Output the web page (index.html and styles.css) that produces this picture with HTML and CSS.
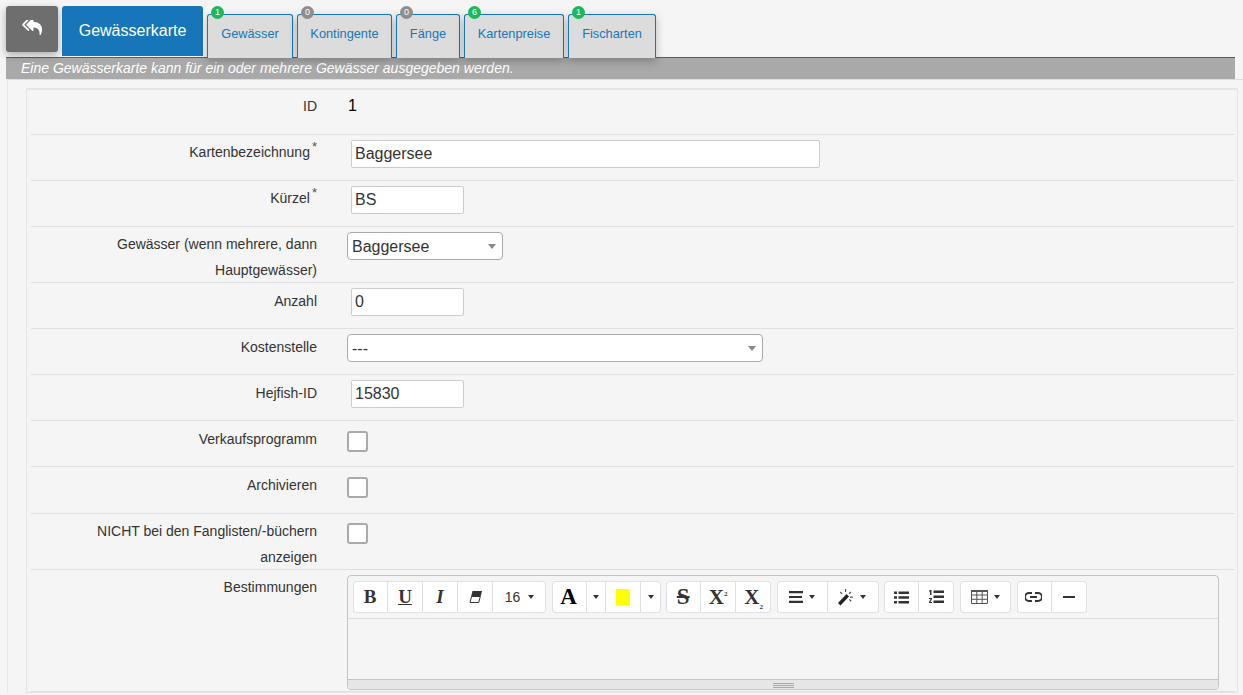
FILE: index.html
```html
<!DOCTYPE html>
<html lang="de">
<head>
    <meta charset="UTF-8">
    <meta name="viewport" content="width=device-width, initial-scale=1.0">
    <title>Gewässerkarte</title>
    <link rel="stylesheet" href="styles.css">
</head>
<body>
    <div class="tabbar">
        <button class="back-button" type="button" aria-label="Zurück">
            <svg width="20" height="15" viewBox="0 224 1792 1344"><path fill="#fff" d="M640 1082v70q0 42-39 59-13 5-25 5-27 0-45-19l-512-512q-19-19-19-45t19-45l512-512q29-31 70-14 39 17 39 59v69l-397 398q-19 19-19 45t19 45zm1152 38q0 58-17 133.500t-38.500 138-48 125-40.500 90.500l-20 40q-8 17-28 17-6 0-9-1-25-8-23-34 43-400-106-565-64-71-170.500-110.500t-267.500-52.500v251q0 42-39 59-13 5-25 5-27 0-45-19l-512-512q-19-19-19-45t19-45l512-512q29-31 70-14 39 17 39 59v262q411 28 599 221 169 173 169 509z"/></svg>
        </button>
        <a class="tab-main" href="#">Gewässerkarte</a>
        <a class="tab" href="#"><span class="badge badge-green">1</span>Gewässer</a>
        <a class="tab tab-kontingente" href="#"><span class="badge">0</span>Kontingente</a>
        <a class="tab tab-faenge" href="#"><span class="badge">0</span>Fänge</a>
        <a class="tab tab-preise" href="#"><span class="badge badge-green">6</span>Kartenpreise</a>
        <a class="tab tab-arten" href="#"><span class="badge badge-green">1</span>Fischarten</a>
    </div>
    <div class="hint">Eine Gewässerkarte kann für ein oder mehrere Gewässer ausgegeben werden.</div>

    <div class="panel">
        <div class="form-box">
            <div class="row row-first">
                <label class="row-label">ID</label>
                <div class="static-value">1</div>
            </div>
            <div class="row">
                <label class="row-label">Kartenbezeichnung<sup class="req">*</sup></label>
                <input class="text-input text-wide" type="text" value="Baggersee">
            </div>
            <div class="row">
                <label class="row-label">Kürzel<sup class="req">*</sup></label>
                <input class="text-input" type="text" value="BS">
            </div>
            <div class="row row-tall">
                <label class="row-label">Gewässer (wenn mehrere, dann Hauptgewässer)</label>
                <div class="select select-small">Baggersee<span class="select-arrow"></span></div>
            </div>
            <div class="row row-low">
                <label class="row-label">Anzahl</label>
                <input class="text-input" type="text" value="0">
            </div>
            <div class="row row-low">
                <label class="row-label">Kostenstelle</label>
                <div class="select select-wide">---<span class="select-arrow"></span></div>
            </div>
            <div class="row row-low">
                <label class="row-label">Hejfish-ID</label>
                <input class="text-input" type="text" value="15830">
            </div>
            <div class="row row-low">
                <label class="row-label">Verkaufsprogramm</label>
                <span class="checkbox"></span>
            </div>
            <div class="row row-low row-archive">
                <label class="row-label">Archivieren</label>
                <span class="checkbox"></span>
            </div>
            <div class="row row-tall">
                <label class="row-label">NICHT bei den Fanglisten/-büchern anzeigen</label>
                <span class="checkbox"></span>
            </div>
            <div class="row row-editor">
                <label class="row-label">Bestimmungen</label>
                <div class="editor">
                    <div class="toolbar">
                        <div class="btn-group">
                            <button class="tool tool-serif" type="button"><b>B</b></button>
                            <button class="tool tool-serif tool-under" type="button"><b>U</b></button>
                            <button class="tool tool-serif" type="button"><b><i>I</i></b></button>
                            <button class="tool" type="button">
                                <svg width="13" height="12" viewBox="0 0 13 12"><path fill="#333" d="M3.500 0H13l-1.500 6H2z"/><path fill="none" stroke="#333" d="M2.400 6 1 11.500h8.700L11.200 6"/></svg>
                            </button>
                            <button class="tool tool-size" type="button">16<span class="caret"></span></button>
                        </div>
                        <div class="btn-group">
                            <button class="tool tool-serif tool-color" type="button"><b>A</b></button>
                            <button class="tool tool-caret" type="button"><span class="caret"></span></button>
                            <button class="tool" type="button"><span class="swatch"></span></button>
                            <button class="tool tool-caret" type="button"><span class="caret"></span></button>
                        </div>
                        <div class="btn-group">
                            <button class="tool tool-serif tool-strike" type="button"><b class="strike">S</b></button>
                            <button class="tool tool-serif tool-big" type="button"><b>X<sup class="script">2</sup></b></button>
                            <button class="tool tool-serif tool-big" type="button"><b>X<sub class="script">2</sub></b></button>
                        </div>
                        <div class="btn-group">
                            <button class="tool tool-drop" type="button">
                                <svg width="14" height="12" viewBox="0 0 14 12"><path fill="#333" d="M0 0h14v2.200H0zM0 4.900h13v2.200H0zM0 9.800h14V12H0z"/></svg><span class="caret"></span>
                            </button>
                            <button class="tool tool-drop tool-wand" type="button">
                                <svg width="17" height="17" viewBox="0 0 17 17"><path fill="#222" d="m9.500 5 2.500 2.500L3.500 16.500 1 14z"/><path fill="#555" d="M8 0h1.200v3H8zM13.500 2.500l.9.900-1.800 1.800-.9-.9zM3.600 2.500l2 1.900-.9.900-2-1.900zM13 7.500h3v1.200h-3zM12 11l.9-.9 1.800 1.800-.9.900z"/></svg><span class="caret"></span>
                            </button>
                        </div>
                        <div class="btn-group">
                            <button class="tool" type="button">
                                <svg width="15" height="13" viewBox="0 0 15 13"><path fill="#333" d="M0 .5h3v2.500H0zM0 5.200h3v2.500H0zM0 10h3v2.500H0zM4.500 .5H15V3H4.500zM4.500 5.200H15v2.500H4.500zM4.500 10H15v2.500H4.500z"/></svg>
                            </button>
                            <button class="tool" type="button">
                                <svg width="15" height="14" viewBox="0 0 15 14"><path fill="#333" d="M1 0h1.500v5H1zM0 .8 1 0v1.200L0 1.800zM0 8h3v1L1.400 12H3v1H0v-1l1.700-3H0zM4.500 .5H15V3H4.500zM4.500 5.500H15V8H4.500zM4.500 10.500H15V13H4.500z"/></svg>
                            </button>
                        </div>
                        <div class="btn-group">
                            <button class="tool tool-drop" type="button">
                                <svg width="17" height="14" viewBox="0 0 17 14"><path fill="none" stroke="#555" d="M.5.500h16v13H.500zM.5 5h16M.5 9.300h16M5.800.5v13M11.200.5v13"/><path fill="#555" d="M0 0h17v2H0z"/></svg><span class="caret"></span>
                            </button>
                        </div>
                        <div class="btn-group">
                            <button class="tool" type="button">
                                <svg width="17" height="10" viewBox="0 0 17 10"><path fill="none" stroke="#333" stroke-width="2" d="M7 1H4a4 4 0 0 0 0 8h3M10 1h3a4 4 0 0 1 0 8h-3M5 5h7"/></svg>
                            </button>
                            <button class="tool" type="button">
                                <svg width="12" height="2" viewBox="0 0 12 2"><path fill="#333" d="M0 0h12v2H0z"/></svg>
                            </button>
                        </div>
                    </div>
                    <div class="editor-area"></div>
                    <div class="statusbar"><span class="grip"></span></div>
                </div>
            </div>
        </div>
    </div>
</body>
</html>
```

FILE: styles.css
```css
body {
    margin: 0;
    height: 695px;
    overflow: hidden;
    background-color: #f5f5f5;
    color: #333;
    font-family: "Liberation Sans", Arial, sans-serif;
    font-size: 14px;
}

/* Kopfzeile mit Reitern */
.tabbar {
    display: flex;
    align-items: flex-start;
    gap: 4px;
    height: 51px;
    margin: 0 8px 0 6px;
    padding-top: 6px;
    border-bottom: 1px solid #1a6ea8;
}
.back-button {
    display: flex;
    align-items: center;
    justify-content: center;
    width: 52px;
    height: 46px;
    padding: 0 0 3px;
    background-color: #6e6e6e;
    border: none;
    border-radius: 3px;
    box-shadow: 0 3px 8px rgba(0, 0, 0, 0.3);
}
.tab-main {
    width: 141px;
    height: 50px;
    background-color: #1676b9;
    border-radius: 3px 3px 0 0;
    color: #fff;
    font-size: 16px;
    line-height: 49px;
    text-align: center;
    text-decoration: none;
}
.tab {
    position: relative;
    box-sizing: border-box;
    width: 86px;
    height: 44px;
    margin-top: 8px;
    background-color: #dcdcdc;
    border: 1px solid #1676b9;
    border-bottom: none;
    border-radius: 3px 3px 0 0;
    box-shadow: 0 3px 8px rgba(0, 0, 0, 0.25);
    color: #1676b9;
    font-size: 12.800px;
    line-height: 38px;
    text-align: center;
    text-decoration: none;
}
.tab-kontingente { width: 95px; }
.tab-faenge { width: 64px; }
.tab-preise { width: 100px; }
.tab-arten { width: 88px; }
.badge {
    position: absolute;
    left: 3px;
    top: -9px;
    width: 13px;
    height: 13px;
    background-color: #8e8e8e;
    border-radius: 50%;
    color: #fff;
    font-size: 9px;
    line-height: 13px;
    text-align: center;
}
.badge-green {
    background-color: #1cb85c;
}
.hint {
    height: 21px;
    margin: 0 8px 0 6px;
    padding-left: 15px;
    background-color: #a9a9a9;
    color: #fff;
    font-size: 14px;
    font-style: italic;
    line-height: 21px;
}

/* Formular */
.panel {
    margin-left: 7px;
    padding: 8px 5px 0 18px;
    border-top: 1px solid #ddd;
    border-left: 1px solid #e6e6e6;
}
.form-box {
    padding: 0 3px 0 4px;
    border: 1px solid #e6e6e6;
    border-top-width: 2px;
}
.row {
    display: flex;
    align-items: flex-start;
    box-sizing: border-box;
    height: 46px;
    border-bottom: 1px solid #e0e0e0;
    padding-top: 5px;
}
.row-first {
    height: 45px;
}
.row-first .row-label {
    line-height: 23px;
}
.row-low .row-label {
    padding-top: 1px;
}
.row-archive {
    height: 47px;
}
.row-tall {
    height: 56px;
}
.row-tall .row-label {
    line-height: 25.500px;
}
.row-tall .checkbox {
    margin-top: 4px;
}
.row-editor {
    height: 122px;
}
.row-editor .row-label {
    padding-top: 0;
}
.row-label {
    flex: none;
    box-sizing: border-box;
    width: 286px;
    margin-right: 30px;
    padding-left: 50px;
    color: #333;
    line-height: 25px;
    text-align: right;
}
.req {
    margin-left: 2px;
    color: #555;
    font-size: 13px;
    line-height: 0;
}
.static-value {
    margin-left: 1px;
    color: #000;
    font-size: 16px;
    line-height: 22px;
}
.text-input {
    box-sizing: border-box;
    width: 113px;
    height: 28px;
    margin-left: 4px;
    padding: 0 3px;
    background-color: #fff;
    border: 1px solid #ccc;
    border-radius: 2px;
    color: #333;
    font-family: inherit;
    font-size: 16px;
}
.text-wide {
    width: 469px;
}
.select {
    position: relative;
    box-sizing: border-box;
    height: 28px;
    padding-left: 4px;
    background-color: #fff;
    border: 1px solid #aaa;
    border-radius: 4px;
    color: #333;
    font-size: 16px;
    line-height: 27px;
}
.select-small {
    width: 156px;
}
.select-wide {
    width: 416px;
}
.select-arrow {
    position: absolute;
    right: 6px;
    top: 11px;
    border-top: 5px solid #888;
    border-left: 4px solid transparent;
    border-right: 4px solid transparent;
}
.checkbox {
    box-sizing: border-box;
    width: 21px;
    height: 21px;
    margin-top: 5px;
    background-color: #fff;
    border: 2px solid #aaa;
    border-radius: 3px;
}

/* Editor */
.editor {
    box-sizing: border-box;
    width: 872px;
    height: 115px;
    border: 1px solid #c4c4c4;
    border-radius: 4px;
    overflow: hidden;
}
.toolbar {
    display: flex;
    gap: 5.600px;
    box-sizing: border-box;
    height: 43px;
    padding: 5px 0 0 5px;
    border-bottom: 1px solid #ddd;
}
.btn-group {
    display: flex;
    height: 32px;
    background-color: #fff;
    border-radius: 4px;
    box-shadow: inset 0 0 0 1px #dee2e6;
}
.tool {
    display: flex;
    align-items: center;
    justify-content: center;
    gap: 6px;
    box-sizing: border-box;
    width: 35px;
    padding: 0;
    background: none;
    border: none;
    border-right: 1px solid #dee2e6;
    color: #333;
    font-family: inherit;
    font-size: 14px;
}
.tool:last-child {
    border-right: none;
}
.tool-serif {
    font-family: "Liberation Serif", serif;
    font-size: 19px;
}
.tool-big {
    font-size: 21px;
}
.tool-strike {
    font-size: 23px;
}
.tool-under b {
    text-decoration: underline;
}
.tool-color {
    color: #000;
    font-size: 23px;
}
.tool-size {
    gap: 8px;
    width: 53px;
}
.tool-caret {
    width: 19.500px;
}
.tool-drop {
    width: 51px;
}
.tool-wand {
    padding-right: 4px;
}
.strike {
    text-decoration: line-through;
}
.script {
    font-size: 7px;
    line-height: 0;
}
.caret {
    border-top: 4px solid #333;
    border-left: 3.500px solid transparent;
    border-right: 3.500px solid transparent;
}
.swatch {
    width: 14px;
    height: 16px;
    background-color: #ff0;
}
.editor-area {
    height: 60px;
}
.statusbar {
    display: flex;
    justify-content: center;
    align-items: center;
    height: 10px;
    background-color: #e6e6e6;
    border-top: 1px solid #c4c4c4;
}
.grip {
    width: 21px;
    height: 5px;
    border-top: 1px solid #aaa;
    border-bottom: 1px solid #aaa;
    background: linear-gradient(#e6e6e6 1px, #aaa 1px, #aaa 2px, #e6e6e6 2px);
    box-sizing: border-box;
}
```
